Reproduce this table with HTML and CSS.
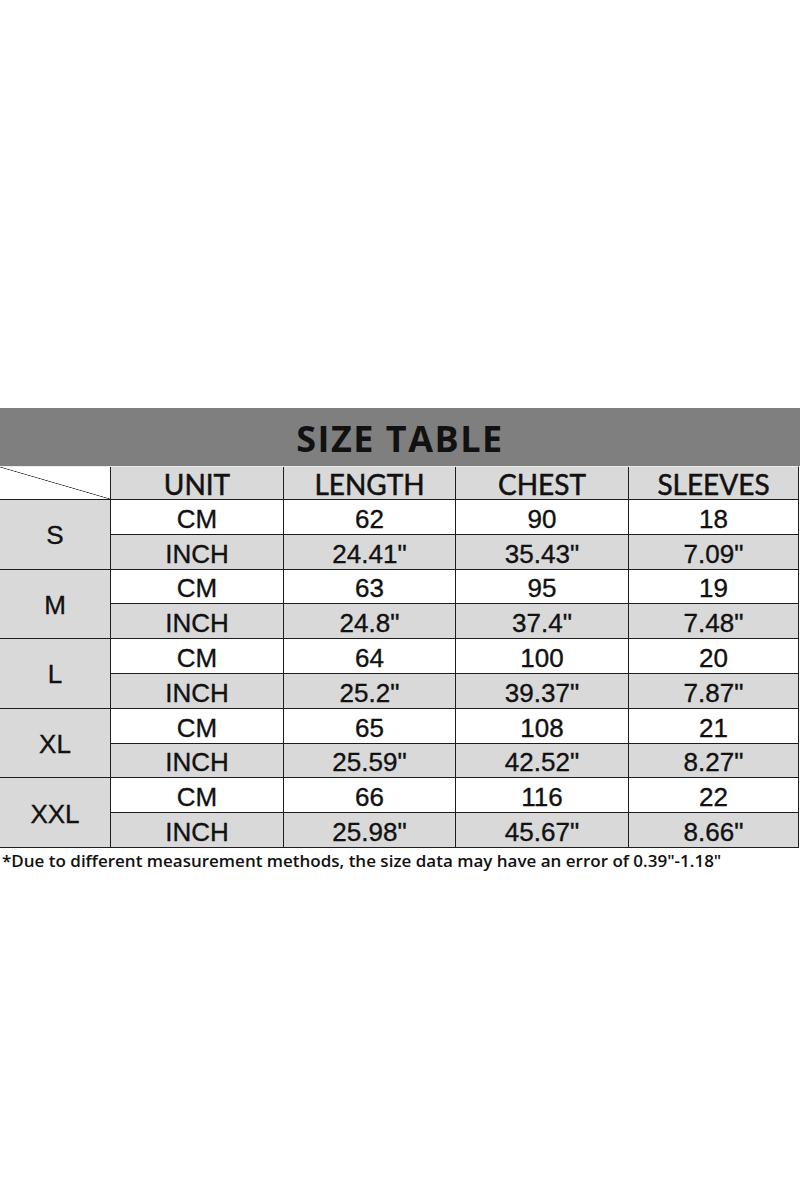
FILE: index.html
```html
<!DOCTYPE html>
<html>
<head>
<meta charset="utf-8">
<link rel="stylesheet" href="styles.css">
</head>
<body>
<div class="page">
  <div class="title">SIZE TABLE</div>
  <div class="grid">
    <div class="corner"></div>
    <div class="hd">UNIT</div>
    <div class="hd">LENGTH</div>
    <div class="hd">CHEST</div>
    <div class="hd">SLEEVES</div>

    <div class="size">S</div>
    <div class="c">CM</div><div class="c">62</div><div class="c">90</div><div class="c">18</div>
    <div class="c g">INCH</div><div class="c g">24.41"</div><div class="c g">35.43"</div><div class="c g">7.09"</div>

    <div class="size">M</div>
    <div class="c">CM</div><div class="c">63</div><div class="c">95</div><div class="c">19</div>
    <div class="c g">INCH</div><div class="c g">24.8"</div><div class="c g">37.4"</div><div class="c g">7.48"</div>

    <div class="size">L</div>
    <div class="c">CM</div><div class="c">64</div><div class="c">100</div><div class="c">20</div>
    <div class="c g">INCH</div><div class="c g">25.2"</div><div class="c g">39.37"</div><div class="c g">7.87"</div>

    <div class="size">XL</div>
    <div class="c">CM</div><div class="c">65</div><div class="c">108</div><div class="c">21</div>
    <div class="c g">INCH</div><div class="c g">25.59"</div><div class="c g">42.52"</div><div class="c g">8.27"</div>

    <div class="size">XXL</div>
    <div class="c">CM</div><div class="c">66</div><div class="c">116</div><div class="c">22</div>
    <div class="c g">INCH</div><div class="c g">25.98"</div><div class="c g">45.67"</div><div class="c g">8.66"</div>
  </div>
  <div class="note">*Due to different measurement methods, the size data may have an error of 0.39"-1.18"</div>
</div>
</body>
</html>
```
FILE: styles.css
```css
html, body {
  margin: 0;
  padding: 0;
  background: #ffffff;
}
.page {
  width: 800px;
  padding-top: 408px;
}
.title {
  height: 58px;
  background: #7f7f7f;
  color: #111;
  font-family: "Open Sans", sans-serif;
  font-weight: 700;
  font-size: 36px;
  line-height: 62px;
  text-align: center;
  letter-spacing: 1.5px;
}
.grid {
  display: grid;
  width: 798px;
  grid-template-columns: 110px 172px 171px 172px 169px;
  grid-template-rows: 32px repeat(10, 33.8px);
  gap: 1px;
  background: #1e1e1e;
  border-right: 1px solid #1e1e1e;
  border-bottom: 1px solid #1e1e1e;
  border-top: 1px solid #e8e8e8;
}
.corner {
  background: linear-gradient(to top right, #fff calc(50% - 0.7px), #333 50%, #fff calc(50% + 0.7px));
}
.hd {
  background: #d9d9d9;
  font-family: "Lato", sans-serif;
  font-size: 28px;
  color: #111;
  -webkit-text-stroke: 0.5px #111;
  display: flex;
  align-items: flex-end;
  justify-content: center;
  line-height: 1;
  padding-bottom: 1px;
}
.size {
  grid-row: span 2;
  background: #d9d9d9;
  font-family: "Liberation Sans", Arial, sans-serif;
  font-size: 26px;
  color: #111;
  -webkit-text-stroke: 0.35px #111;
  display: flex;
  align-items: center;
  justify-content: center;
  padding-top: 3px;
}
.c {
  background: #ffffff;
  font-family: "Liberation Sans", Arial, sans-serif;
  font-size: 26px;
  color: #111;
  -webkit-text-stroke: 0.35px #111;
  display: flex;
  align-items: center;
  justify-content: center;
  line-height: 1;
  padding-top: 4px;
}
.c.g {
  background: #d9d9d9;
}
.note {
  font-family: "Open Sans", sans-serif;
  font-weight: 600;
  font-size: 17px;
  color: #111;
  padding: 2px 0 0 2px;
  line-height: 22px;
}
```
